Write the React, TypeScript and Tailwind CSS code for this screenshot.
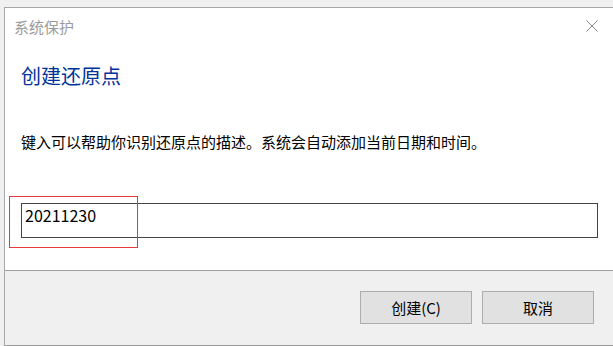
import React from "react";

const FONT = "font-['Noto_Sans_CJK_SC',sans-serif]";

function CloseIcon() {
  return (
    <svg width="12" height="12" viewBox="0 0 12 12" className="block">
      <path d="M0.5 0.5 L11.5 11.5 M11.5 0.5 L0.5 11.5" stroke="#8a8a8a" strokeWidth="1" fill="none" />
    </svg>
  );
}

function DialogButton({ label }: { label: string }) {
  return (
    <button
      type="button"
      className="w-[112px] h-[33px] border border-[#adadad] bg-[#e1e1e1] text-[15px] leading-[15px] text-black flex items-center justify-center"
    >
      {label}
    </button>
  );
}

export default function App() {
  return (
    <div className={`relative w-[613px] h-[346px] overflow-hidden bg-[#f0f0f0] ${FONT}`}>
      <div className="ml-[4px] mt-[7px] h-[339px] border-l border-t border-[#a8a8a8] bg-white flex flex-col">
        {/* title bar */}
        <div className="h-[36px] flex items-center justify-between pl-[9px] pr-[15px]">
          <span className="text-[15px] leading-[15px] text-[#9b9b9b]">系统保护</span>
          <CloseIcon />
        </div>

        <h1 className="mt-[22px] pl-[16px] text-[20px] leading-[20px] font-normal text-[#003399]">创建还原点</h1>

        <p className="mt-[48px] pl-[16px] text-[15px] leading-[15px] text-black">
          键入可以帮助你识别还原点的描述。系统会自动添加当前日期和时间。
        </p>

        <div className="mt-[54px] ml-[16px] w-[577px] h-[35px] border border-[#444444] bg-white pt-[3px] pl-[3px]">
          <span className="block text-[16px] leading-[16px] text-black">20211230</span>
        </div>

        {/* footer */}
        <div className="mt-[32px] h-[76px] border-t border-b border-t-[#a0a0a0] border-b-[#9c9c9c] bg-[#f0f0f0] flex justify-end gap-[10px] pt-[20px] pr-[19px]">
          <DialogButton label="创建(C)" />
          <DialogButton label="取消" />
        </div>
      </div>

      {/* annotation frame */}
      <div className="absolute left-[9px] top-[196px] w-[129px] h-[52px] border border-[#e5393a] pointer-events-none" />
    </div>
  );
}
